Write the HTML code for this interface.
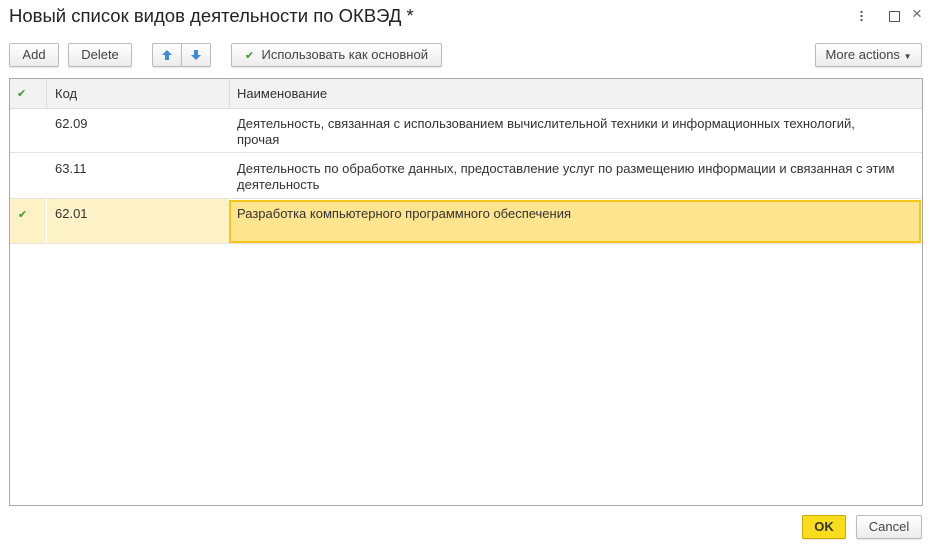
<!DOCTYPE html><html><head><meta charset="utf-8"><style>
body{margin:0;width:939px;height:548px;background:#fff;font-family:"Liberation Sans",Arial,sans-serif;font-size:13px;color:#333;position:relative;overflow:hidden}
.a{position:absolute}
.btn{position:absolute;top:43px;height:24px;box-sizing:border-box;border:1px solid #bbb;border-radius:2px;background:linear-gradient(#fff,#ececec);line-height:22px;text-align:center;color:#444;font-size:13px;box-shadow:0 1px 1px rgba(0,0,0,.1)}
.cell{position:absolute;font-size:13px;color:#333;line-height:16px;white-space:nowrap}
</style></head><body>
<div class="a" style="left:9px;top:5px;font-size:18.5px;color:#222">Новый список видов деятельности по ОКВЭД *</div>
<div class="a" style="left:860px;top:10px;width:3px;height:12px;background:radial-gradient(circle,#555 1px,transparent 1.3px) 0 0/3px 4px"></div>
<div class="a" style="left:889px;top:11px;width:9px;height:9px;border:1px solid #555"></div>
<div class="a" style="left:912px;top:4px;font-size:17px;color:#666">×</div>
<div class="btn" style="left:9px;width:50px">Add</div>
<div class="btn" style="left:68px;width:64px">Delete</div>
<div class="btn" style="left:152px;width:30px"><svg width="12" height="12" viewBox="0 0 12 12" style="margin-top:5px"><path d="M6 1L11 6H8V11H4V6H1Z" fill="#3d8bd8"/></svg></div>
<div class="btn" style="left:181px;width:30px"><svg width="12" height="12" viewBox="0 0 12 12" style="margin-top:5px"><path d="M6 11L11 6H8V1H4V6H1Z" fill="#3d8bd8"/></svg></div>
<div class="btn" style="left:231px;width:211px"><span style="color:#3a9a2a;font-size:11px">✔</span>&nbsp; Использовать как основной</div>
<div class="btn" style="left:815px;width:107px">More actions <span style="font-size:8px">▼</span></div>
<div class="a" style="left:9px;top:78px;width:912px;height:426px;border:1px solid #aaa"></div>
<div class="a" style="left:10px;top:79px;width:912px;height:29px;background:#f2f2f2;border-bottom:1px solid #ddd"></div>
<div class="a" style="left:46px;top:79px;width:1px;height:29px;background:#ddd"></div>
<div class="a" style="left:229px;top:79px;width:1px;height:29px;background:#ddd"></div>
<div class="cell" style="left:17px;top:86px;color:#3a9a2a;font-size:11px">✔</div>
<div class="cell" style="left:55px;top:86px">Код</div>
<div class="cell" style="left:237px;top:86px">Наименование</div>
<div class="a" style="left:10px;top:152px;width:912px;height:1px;background:#e3e3e3"></div>
<div class="a" style="left:10px;top:198px;width:912px;height:1px;background:#e3e3e3"></div>
<div class="a" style="left:10px;top:243px;width:912px;height:1px;background:#e3e3e3"></div>
<div class="cell" style="left:55px;top:116px">62.09</div>
<div class="cell" style="left:237px;top:116px">Деятельность, связанная с использованием вычислительной техники и информационных технологий,<br>прочая</div>
<div class="cell" style="left:55px;top:161px">63.11</div>
<div class="cell" style="left:237px;top:161px">Деятельность по обработке данных, предоставление услуг по размещению информации и связанная с этим<br>деятельность</div>
<div class="a" style="left:10px;top:199px;width:219px;height:44px;background:#fdf2c6"></div>
<div class="a" style="left:46px;top:199px;width:1px;height:44px;background:#fff"></div>
<div class="a" style="left:229px;top:200px;width:688px;height:39px;background:#fde48e;border:2px solid #f5c518"></div>
<div class="cell" style="left:18px;top:207px;color:#3a9a2a;font-size:11px">✔</div>
<div class="cell" style="left:55px;top:206px">62.01</div>
<div class="cell" style="left:237px;top:206px">Разработка компьютерного программного обеспечения</div>
<div class="btn" style="left:802px;top:515px;width:44px;background:#f9dc1c;border-color:#c9a800;font-weight:bold;color:#333">OK</div>
<div class="btn" style="left:856px;top:515px;width:66px">Cancel</div>
</body></html>
